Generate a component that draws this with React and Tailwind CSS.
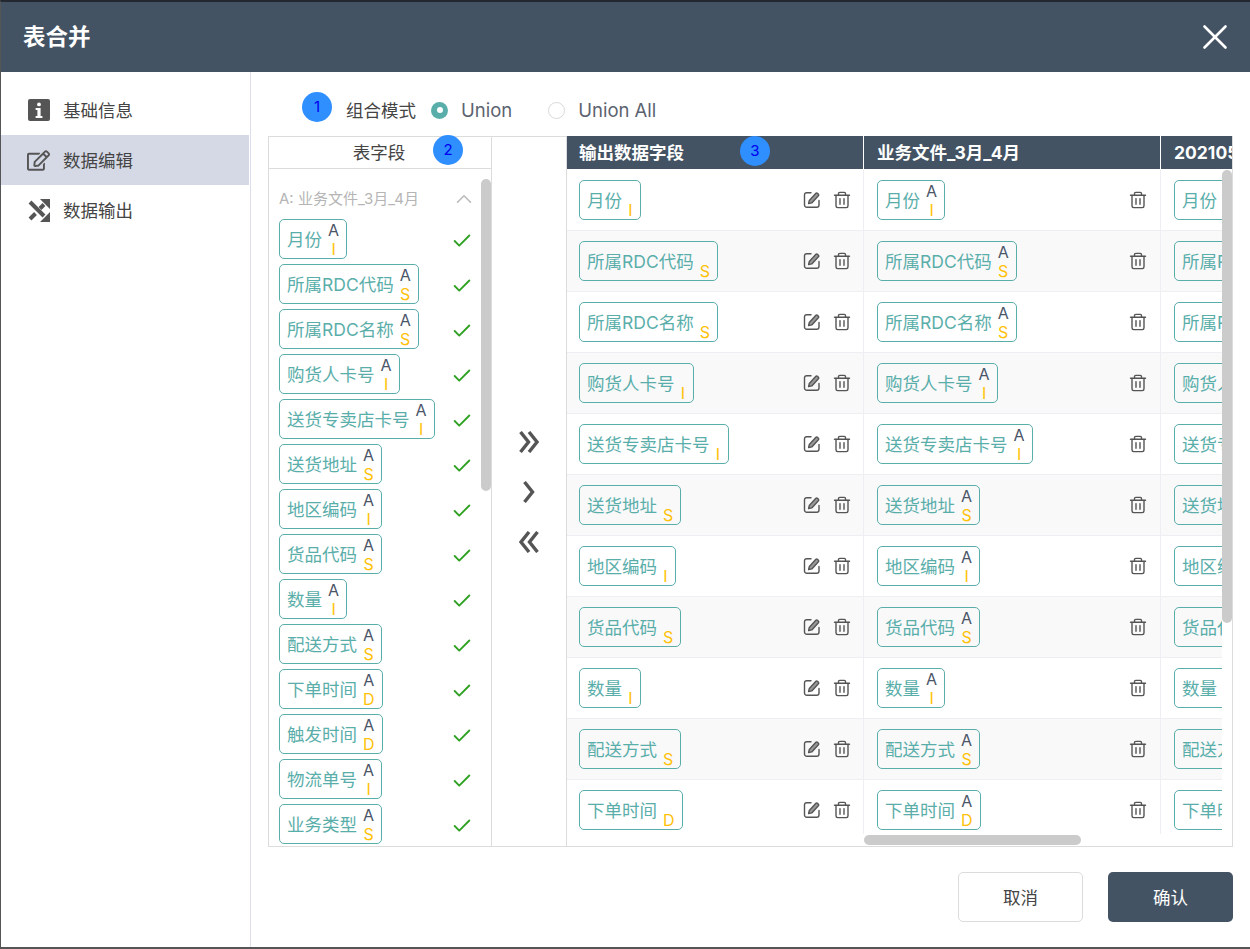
import { Check, ChevronUp, X } from "lucide-react"
import { FaRegEdit } from "react-icons/fa"

const fields = [
    ["月份", "I"],
    ["所属RDC代码", "S"],
    ["所属RDC名称", "S"],
    ["购货人卡号", "I"],
    ["送货专卖店卡号", "I"],
    ["送货地址", "S"],
    ["地区编码", "I"],
    ["货品代码", "S"],
    ["数量", "I"],
    ["配送方式", "S"],
    ["下单时间", "D"],
    ["触发时间", "D"],
    ["物流单号", "I"],
    ["业务类型", "S"],
]

const tableFields = fields.slice(0, 11)

const Badge = ({ n, className }) => (
    <span className={`flex h-[30px] w-[30px] items-center justify-center rounded-full bg-[#2f8fff] text-[15px] text-[#0000ee] ${className}`}>{n}</span>
)

const Tag = ({ name, type, letter = true }) => (
    <div className="flex h-10 w-fit shrink-0 items-stretch rounded-[5px] border border-[#5aaeaa] pl-[7px]">
        <span className="self-center whitespace-nowrap pt-[2px] text-[17.5px] leading-none text-[#5aaeaa]">{name}</span>
        <span className="ml-[6px] mr-[7px] flex min-w-[5px] flex-col items-center justify-between pt-px text-[16px] leading-[18px]">
            <span className="text-[#4a5568]">{letter ? "A" : ""}</span>
            <span className="text-[#ffc107]">{type}</span>
        </span>
    </div>
)

const Trash = () => (
    <svg width="18" height="18" viewBox="0 0 18 18" fill="none" stroke="#555" strokeWidth="1.4" strokeLinecap="round" strokeLinejoin="round">
        <path d="M1.5 4.2h15" />
        <path d="M5.5 4V2.6c0-.8.5-1.2 1.2-1.2h4.6c.7 0 1.2.4 1.2 1.2V4" />
        <path d="M3 4.4v10.4c0 1 .7 1.8 1.7 1.8h8.6c1 0 1.7-.8 1.7-1.8V4.4" />
        <path d="M7 7.6v5.6M11 7.6v5.6" />
    </svg>
)

const Pen = () => (
    <svg width="18" height="18" viewBox="0 0 18 18" fill="none" stroke="#555" strokeWidth="1.4" strokeLinecap="round" strokeLinejoin="round">
        <path d="M8 1.7H3.8A2.3 2.3 0 0 0 1.5 4v10a2.3 2.3 0 0 0 2.3 2.3h9.9a2.3 2.3 0 0 0 2.3-2.3V9.5" />
        <path d="M5.6 12.6l.7-3.2 6.6-7.1c.5-.5 1.1-.5 1.6 0l.9.9c.5.5.5 1.1 0 1.6l-6.6 7.1z" fill="#999" />
    </svg>
)

const InfoIcon = () => (
    <svg width="22" height="22" viewBox="0 0 22 22">
        <rect width="22" height="22" rx="2" fill="#555" />
        <circle cx="11" cy="5.4" r="1.9" fill="#fff" />
        <path d="M7.6 9h5v8h1.8v2H7.6v-2h1.8v-6H7.6z" fill="#fff" />
    </svg>
)

const ShuffleIcon = () => (
    <svg width="22" height="23" viewBox="0 0 22 23">
        <path d="M2 3l14 14" stroke="#555" strokeWidth="4" />
        <path d="M2 20l5.5-5.5M12 9.5l4-4" stroke="#555" strokeWidth="4" />
        <path d="M22 23v-10l-10 10zM22 0v10l-10-10z" fill="#555" />
    </svg>
)

const Arrows = ({ d, w }) => (
    <svg width={w} height="22" viewBox={`0 0 ${w} 22`} fill="none" stroke="#555" strokeWidth="3.4" strokeLinejoin="miter">
        <path d={d} />
    </svg>
)

const Row = ({ name, type, stripe }) => (
    <div className={`flex h-[61px] border-b border-[#eeeef3] ${stripe ? "bg-[#f9f9fa]" : "bg-white"}`}>
        <div className="flex w-[297px] shrink-0 items-center justify-between border-r border-[#eeeef3] pl-3 pr-3">
            <Tag name={name} type={type} letter={false} />
            <div className="flex items-center gap-3">
                <Pen />
                <Trash />
            </div>
        </div>
        <div className="flex w-[297px] shrink-0 items-center justify-between border-r border-[#eeeef3] pl-[13px] pr-[13px]">
            <Tag name={name} type={type} />
            <Trash />
        </div>
        <div className="flex w-[297px] shrink-0 items-center pl-[13px]">
            <Tag name={name} type={type} />
        </div>
    </div>
)

const menu = [
    { label: "基础信息", icon: <InfoIcon /> },
    { label: "数据编辑", icon: <FaRegEdit size={23} color="#555" />, active: true },
    { label: "数据输出", icon: <ShuffleIcon /> },
]

const Radio = ({ label, checked }) => (
    <label className="flex items-center gap-[13px]">
        {checked ? (
            <span className="flex h-[17px] w-[17px] items-center justify-center rounded-full bg-[#5aaeaa]">
                <span className="h-[6px] w-[6px] rounded-full bg-white" />
            </span>
        ) : (
            <span className="h-[17px] w-[17px] rounded-full border border-[#d9d9d9]" />
        )}
        <span className="pt-[2px] text-[18.5px] text-[#5c6370]">{label}</span>
    </label>
)

const App = () => {
    return (
        <div className="h-[949px] w-[1250px] overflow-hidden border-t-2 border-b-2 border-l border-t-[#23272f] border-b-[#555] border-l-[#555] bg-white font-['Inter','Noto_Sans_CJK_SC',sans-serif] text-[17.5px] text-[#444]">
            <header className="flex h-[70px] items-center justify-between bg-[#435363] pl-[22px] pr-[14px]">
                <h1 className="text-[22.5px] font-bold text-white">表合并</h1>
                <X size={42} color="#fff" strokeWidth={1.5} />
            </header>
            <div className="flex h-[875px]">
                <aside className="w-[250px] shrink-0 border-r border-[#dcdfe9] pr-px pt-[13px]">
                    {menu.map((m) => (
                        <div key={m.label} className={`flex h-[50px] items-center ${m.active ? "bg-[#d5d9e6]" : ""}`}>
                            <span className="flex w-[62px] justify-center pl-[13px]">{m.icon}</span>
                            <span className="pt-[2px] text-[#444]">{m.label}</span>
                        </div>
                    ))}
                </aside>
                <main className="flex min-w-0 flex-1 flex-col pl-[17px] pr-[17px]">
                    <div className="flex h-[64px] shrink-0 items-center pl-[34px] pt-[12px]">
                        <Badge n="1" className="mb-[6px] mr-[14px]" />
                        <span className="mr-[15px] pt-[2px]">组合模式</span>
                        <Radio label="Union" checked />
                        <span className="w-[36px]" />
                        <Radio label="Union All" />
                    </div>
                    <div className="flex h-[711px] border border-[#dcdcdc]">
                        <section className="relative flex w-[223px] shrink-0 flex-col border-r border-[#dcdcdc]">
                            <div className="relative flex h-[32px] shrink-0 items-center justify-center border-b border-[#dcdcdc] pr-[2px] pt-[2px]">
                                表字段
                                <Badge n="2" className="absolute left-[164px] top-[-2px]" />
                            </div>
                            <div className="min-h-0 flex-1 overflow-hidden pl-[10px] pr-[18px] pt-[18px]">
                                <div className="mb-[8px] flex h-6 items-center justify-between text-[15px] text-[#b5b5b5]">
                                    <span>A: 业务文件_3月_4月</span>
                                    <ChevronUp size={26} color="#bbb" strokeWidth={1.5} className="-mr-[4px]" />
                                </div>
                                <div className="flex flex-col gap-[5px]">
                                    {fields.map(([name, type]) => (
                                        <div key={name} className="flex items-center justify-between">
                                            <Tag name={name} type={type} />
                                            <Check size={22} color="#2ea121" strokeWidth={2} className="mt-[4px]" />
                                        </div>
                                    ))}
                                </div>
                            </div>
                            <div className="absolute right-0 top-[42px] h-[312px] w-[10px] rounded-full bg-[#cbcbcb]" />
                        </section>
                        <div className="flex w-[75px] shrink-0 flex-col items-center justify-center gap-[28px] border-r border-[#dcdcdc]">
                            <Arrows w={20} d="M1.5 1L9.5 11L1.5 21M10 1L18 11L10 21" />
                            <Arrows w={12} d="M1.5 1L9.5 11L1.5 21" />
                            <Arrows w={20} d="M10 1L2 11L10 21M18.5 1L10.5 11L18.5 21" />
                        </div>
                        <section className="relative -mt-px min-w-0 flex-1 overflow-hidden">
                            <div className="relative flex h-[33px] bg-[#435363] font-bold text-white">
                                <div className="w-[297px] shrink-0 border-r border-white pl-3 leading-[34px]">输出数据字段</div>
                                <div className="w-[297px] shrink-0 border-r border-white pl-[13px] leading-[34px]">业务文件_3月_4月</div>
                                <div className="shrink-0 pl-[13px] leading-[34px]">20210501</div>
                                <Badge n="3" className="absolute left-[173px] top-0 font-normal" />
                            </div>
                            <div className="mr-[10px] h-[665px] overflow-hidden pt-px">
                                {tableFields.map(([name, type], i) => (
                                    <Row key={name} name={name} type={type} stripe={i % 2 === 1} />
                                ))}
                            </div>
                            <div className="absolute right-0 top-[34px] h-[453px] w-[10px] rounded-full bg-[#cbcbcb]" />
                            <div className="absolute bottom-[1px] left-[297px] h-[10px] w-[217px] rounded-full bg-[#cbcbcb]" />
                        </section>
                    </div>
                    <div className="flex flex-1 items-center justify-end gap-[25px]">
                        <button className="h-[50px] w-[125px] rounded-[5px] border border-[#dcdcdc] bg-white pt-[2px] text-[#444]">取消</button>
                        <button className="h-[50px] w-[125px] rounded-[5px] bg-[#435363] pt-[2px] text-white">确认</button>
                    </div>
                </main>
            </div>
        </div>
    )
}

export default App
